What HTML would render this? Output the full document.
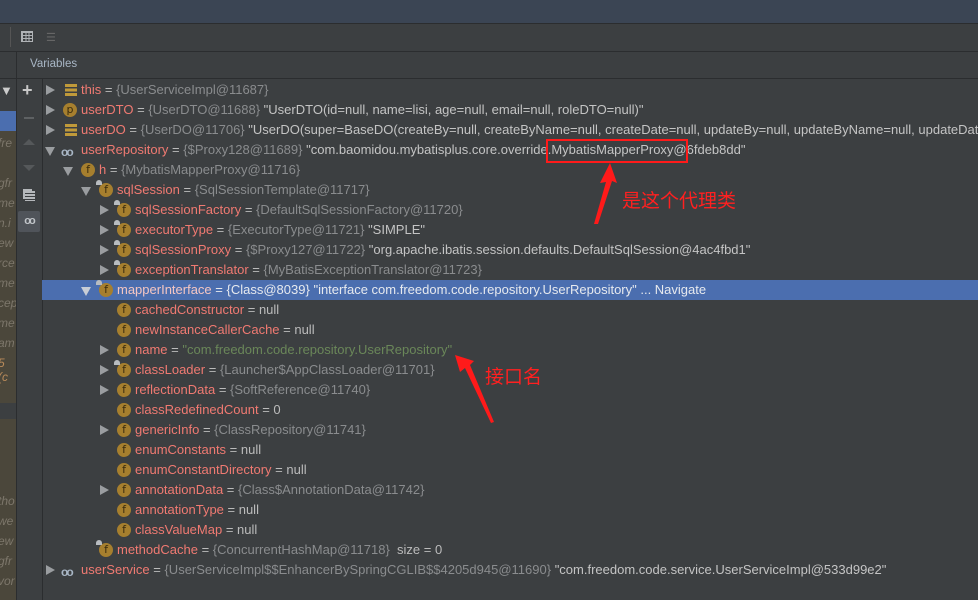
<!DOCTYPE html>
<html><head><meta charset="utf-8"><style>
*{margin:0;padding:0;box-sizing:border-box}
body{width:978px;height:600px;overflow:hidden;background:#3c3f41;font-family:"Liberation Sans","Noto Sans CJK SC",sans-serif;font-size:13px;position:relative}
.abs{position:absolute}
.row{position:absolute;left:42px;right:0;height:20px;line-height:20px;white-space:nowrap;color:#bbbbbb}
.sel{background:#4b6eaf}
.n{color:#f07a72}
.sel .n{color:#f4c6c2}
.g{color:#8a8c8e}
.sel .g,.sel .w{color:#e6e9ee}
.s{color:#6a8759}
.w{color:#c4c4c4}
.tri{position:absolute;top:5px;width:0;height:0;border-top:5px solid transparent;border-bottom:5px solid transparent;border-left:9px solid #9a9da0}
.tri.d{top:7px;border-left:5px solid transparent;border-right:5px solid transparent;border-top:9px solid #9a9da0;border-bottom:0}
.f{position:absolute;top:3px;width:14px;height:14px;border-radius:50%;background:#a67f2e;color:#3a2c0e;font-size:11px;line-height:14px;text-align:center;font-family:"DejaVu Sans",sans-serif}
.lk:after{content:"";position:absolute;left:-3px;top:-3px;width:6px;height:5px;border-radius:3px 3px 0 0;background:#b8bcc0}
.bars{position:absolute;top:4px;width:12px;height:12px;background:repeating-linear-gradient(#c09a3a 0 3px,transparent 3px 4.5px)}
.oo{position:absolute;top:2px;color:#a9b7c6;font-size:12px;letter-spacing:-2px;font-weight:bold}
.t{position:absolute}
.left i{position:absolute;left:-2px;color:#7d776b;font-size:12px}
</style></head><body>
<div class="abs" style="left:0;top:0;width:978px;height:23px;background:#3b4554"></div>
<div class="abs" style="left:0;top:23px;width:978px;height:1px;background:#2b2d2f"></div>
<div class="abs" style="left:0;top:51px;width:978px;height:1px;background:#2b2d2f"></div>
<div class="abs" style="left:0;top:78px;width:978px;height:1px;background:#2b2d2f"></div>
<div class="abs" style="left:10px;top:27px;width:1px;height:20px;background:#555"></div>
<div class="abs" style="left:21px;top:31px;width:12px;height:11px;border:1px solid #b0b3b6;background:repeating-linear-gradient(90deg,#b0b3b6 0 1px,transparent 1px 3.3px),repeating-linear-gradient(#b0b3b6 0 1px,transparent 1px 3px)"></div>
<div class="abs" style="left:46px;top:31px;color:#666;font-size:11px;">☰</div>
<div class="abs" style="left:30px;top:58px;color:#a9b7c6;font-size:11.5px">Variables</div>
<div class="abs" style="left:16px;top:52px;width:1px;height:548px;background:#2b2d2f"></div>
<div class="abs" style="left:42px;top:79px;width:1px;height:521px;background:#2b2d2f"></div>
<div class="abs left" style="left:0;top:79px;width:16px;height:521px;background:#3c3f41;overflow:hidden">
<div class="abs" style="left:0;top:32px;width:16px;height:20px;background:#4b6eaf"></div>
<div class="abs" style="left:0;top:52px;width:16px;height:272px;background:#4b473b"></div>
<div class="abs" style="left:0;top:340px;width:16px;height:181px;background:#4b473b"></div>
<div class="abs" style="left:0;top:4px;color:#ccc;font-size:13px">▼</div>
<i style="top:57px">fre</i><i style="top:97px">gfr</i><i style="top:117px">me</i><i style="top:137px">n.i</i><i style="top:157px">ew</i><i style="top:177px">rce</i><i style="top:197px">me</i><i style="top:217px">cep</i><i style="top:237px">me</i><i style="top:257px">am</i><i style="top:277px;color:#b88a5a">5 (c</i>
<i style="top:415px">tho</i><i style="top:435px">we</i><i style="top:455px">ew</i><i style="top:475px">gfr</i><i style="top:495px">vor</i>
</div>
<div class="abs" style="left:22px;top:80px;color:#c8c8c8;font-size:18px;font-weight:bold">+</div>
<div class="abs" style="left:24px;top:117px;width:10px;height:2px;background:#5e6163"></div>
<div class="abs" style="left:23px;top:139px;border-left:6px solid transparent;border-right:6px solid transparent;border-bottom:6px solid #55585a"></div>
<div class="abs" style="left:23px;top:165px;border-left:6px solid transparent;border-right:6px solid transparent;border-top:6px solid #55585a"></div>
<div class="abs" style="left:23px;top:189px;width:9px;height:10px;border:2px solid #b5b8bb;border-right:0;border-bottom:0"></div>
<div class="abs" style="left:25px;top:191px;width:10px;height:10px;background:repeating-linear-gradient(#b5b8bb 0 2px,#3c3f41 2px 3px)"></div>
<div class="abs" style="left:18px;top:211px;width:22px;height:21px;background:#50545a;border-radius:2px;color:#c0c4c8;font-size:11px;font-weight:bold;text-align:center;line-height:21px;letter-spacing:-2px">oo</div>

<div class="row" style="top:80px"><div class="tri" style="left:4px"></div><div class="bars" style="left:23px"></div><span class="t" style="left:39px"><span class="n">this</span> = <span class="g">{UserServiceImpl@11687}</span></span></div>
<div class="row" style="top:100px"><div class="tri" style="left:4px"></div><div class="f" style="left:21px">p</div><span class="t" style="left:39px"><span class="n">userDTO</span> = <span class="g">{UserDTO@11688}</span> <span class="w">"UserDTO(id=null, name=lisi, age=null, email=null, roleDTO=null)"</span></span></div>
<div class="row" style="top:120px"><div class="tri" style="left:4px"></div><div class="bars" style="left:23px"></div><span class="t" style="left:39px"><span class="n">userDO</span> = <span class="g">{UserDO@11706}</span> <span class="w">"UserDO(super=BaseDO(createBy=null, createByName=null, createDate=null, updateBy=null, updateByName=null, updateDate</span></span></div>
<div class="row" style="top:140px"><div class="tri d" style="left:3px"></div><span class="oo" style="left:19px">oo</span><span class="t" style="left:39px"><span class="n">userRepository</span> = <span class="g">{$Proxy128@11689}</span> <span class="w">"com.baomidou.mybatisplus.core.override.MybatisMapperProxy@6fdeb8dd"</span></span></div>
<div class="row" style="top:160px"><div class="tri d" style="left:21px"></div><div class="f" style="left:39px">f</div><span class="t" style="left:57px"><span class="n">h</span> = <span class="g">{MybatisMapperProxy@11716}</span></span></div>
<div class="row" style="top:180px"><div class="tri d" style="left:39px"></div><div class="f lk" style="left:57px">f</div><span class="t" style="left:75px"><span class="n">sqlSession</span> = <span class="g">{SqlSessionTemplate@11717}</span></span></div>
<div class="row" style="top:200px"><div class="tri" style="left:58px"></div><div class="f lk" style="left:75px">f</div><span class="t" style="left:93px"><span class="n">sqlSessionFactory</span> = <span class="g">{DefaultSqlSessionFactory@11720}</span></span></div>
<div class="row" style="top:220px"><div class="tri" style="left:58px"></div><div class="f lk" style="left:75px">f</div><span class="t" style="left:93px"><span class="n">executorType</span> = <span class="g">{ExecutorType@11721}</span> <span class="w">"SIMPLE"</span></span></div>
<div class="row" style="top:240px"><div class="tri" style="left:58px"></div><div class="f lk" style="left:75px">f</div><span class="t" style="left:93px"><span class="n">sqlSessionProxy</span> = <span class="g">{$Proxy127@11722}</span> <span class="w">"org.apache.ibatis.session.defaults.DefaultSqlSession@4ac4fbd1"</span></span></div>
<div class="row" style="top:260px"><div class="tri" style="left:58px"></div><div class="f lk" style="left:75px">f</div><span class="t" style="left:93px"><span class="n">exceptionTranslator</span> = <span class="g">{MyBatisExceptionTranslator@11723}</span></span></div>
<div class="row sel" style="top:280px"><div class="tri d" style="left:39px;border-top-color:#c8cdd6"></div><div class="f lk" style="left:57px">f</div><span class="t" style="left:75px"><span class="n">mapperInterface</span> <span class="w">=</span> <span class="g">{Class@8039}</span> <span class="w">"interface com.freedom.code.repository.UserRepository" ... Navigate</span></span></div>
<div class="row" style="top:300px"><div class="f" style="left:75px">f</div><span class="t" style="left:93px"><span class="n">cachedConstructor</span> = null</span></div>
<div class="row" style="top:320px"><div class="f" style="left:75px">f</div><span class="t" style="left:93px"><span class="n">newInstanceCallerCache</span> = null</span></div>
<div class="row" style="top:340px"><div class="tri" style="left:58px"></div><div class="f" style="left:75px">f</div><span class="t" style="left:93px"><span class="n">name</span> = <span class="s">"com.freedom.code.repository.UserRepository"</span></span></div>
<div class="row" style="top:360px"><div class="tri" style="left:58px"></div><div class="f lk" style="left:75px">f</div><span class="t" style="left:93px"><span class="n">classLoader</span> = <span class="g">{Launcher$AppClassLoader@11701}</span></span></div>
<div class="row" style="top:380px"><div class="tri" style="left:58px"></div><div class="f" style="left:75px">f</div><span class="t" style="left:93px"><span class="n">reflectionData</span> = <span class="g">{SoftReference@11740}</span></span></div>
<div class="row" style="top:400px"><div class="f" style="left:75px">f</div><span class="t" style="left:93px"><span class="n">classRedefinedCount</span> = 0</span></div>
<div class="row" style="top:420px"><div class="tri" style="left:58px"></div><div class="f" style="left:75px">f</div><span class="t" style="left:93px"><span class="n">genericInfo</span> = <span class="g">{ClassRepository@11741}</span></span></div>
<div class="row" style="top:440px"><div class="f" style="left:75px">f</div><span class="t" style="left:93px"><span class="n">enumConstants</span> = null</span></div>
<div class="row" style="top:460px"><div class="f" style="left:75px">f</div><span class="t" style="left:93px"><span class="n">enumConstantDirectory</span> = null</span></div>
<div class="row" style="top:480px"><div class="tri" style="left:58px"></div><div class="f" style="left:75px">f</div><span class="t" style="left:93px"><span class="n">annotationData</span> = <span class="g">{Class$AnnotationData@11742}</span></span></div>
<div class="row" style="top:500px"><div class="f" style="left:75px">f</div><span class="t" style="left:93px"><span class="n">annotationType</span> = null</span></div>
<div class="row" style="top:520px"><div class="f" style="left:75px">f</div><span class="t" style="left:93px"><span class="n">classValueMap</span> = null</span></div>
<div class="row" style="top:540px"><div class="f lk" style="left:57px">f</div><span class="t" style="left:75px"><span class="n">methodCache</span> = <span class="g">{ConcurrentHashMap@11718}</span>&nbsp; size = 0</span></div>
<div class="row" style="top:560px"><div class="tri" style="left:4px"></div><span class="oo" style="left:19px">oo</span><span class="t" style="left:39px"><span class="n">userService</span> = <span class="g">{UserServiceImpl$$EnhancerBySpringCGLIB$$4205d945@11690}</span> <span class="w">"com.freedom.code.service.UserServiceImpl@533d99e2"</span></span></div>

<div class="abs" style="left:546px;top:139px;width:142px;height:24px;border:2px solid #ff1a1a"></div>
<svg class="abs" style="left:0;top:0" width="978" height="600">
<polygon points="610,163 600,183 606,182 594,224 598,224 612,181 617,183" fill="#ff1a1a"/>
<polygon points="455,355 460,372 465,368 491,423 494,422 470,365 474,361" fill="#ff1a1a"/>
</svg>
<div class="abs" style="left:622px;top:186px;color:#ff2020;font-size:19px;font-family:'Noto Sans CJK SC',sans-serif">是这个代理类</div>
<div class="abs" style="left:485px;top:362px;color:#ff2020;font-size:19px;font-family:'Noto Sans CJK SC',sans-serif">接口名</div>
</body></html>
